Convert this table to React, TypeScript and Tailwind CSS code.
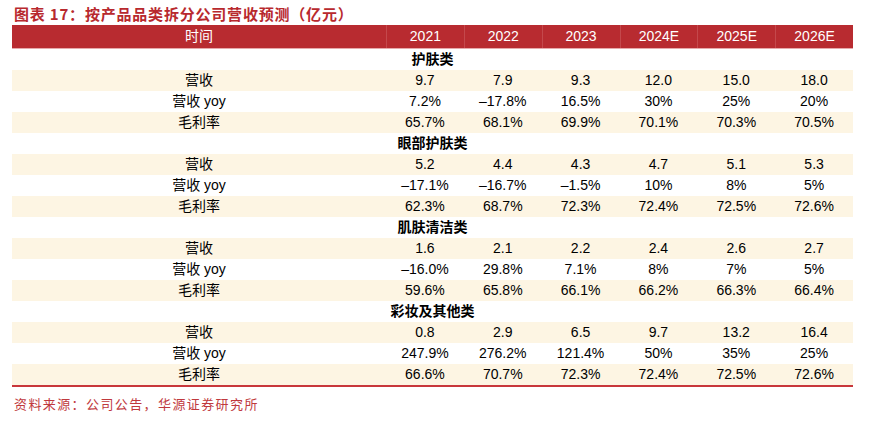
const YEARS = ["2021", "2022", "2023", "2024E", "2025E", "2026E"];

type Section = { name: string; rows: { label: string; values: string[] }[] };

const SECTIONS: Section[] = [
  {
    name: "护肤类",
    rows: [
      { label: "营收", values: ["9.7", "7.9", "9.3", "12.0", "15.0", "18.0"] },
      { label: "营收 yoy", values: ["7.2%", "–17.8%", "16.5%", "30%", "25%", "20%"] },
      { label: "毛利率", values: ["65.7%", "68.1%", "69.9%", "70.1%", "70.3%", "70.5%"] },
    ],
  },
  {
    name: "眼部护肤类",
    rows: [
      { label: "营收", values: ["5.2", "4.4", "4.3", "4.7", "5.1", "5.3"] },
      { label: "营收 yoy", values: ["–17.1%", "–16.7%", "–1.5%", "10%", "8%", "5%"] },
      { label: "毛利率", values: ["62.3%", "68.7%", "72.3%", "72.4%", "72.5%", "72.6%"] },
    ],
  },
  {
    name: "肌肤清洁类",
    rows: [
      { label: "营收", values: ["1.6", "2.1", "2.2", "2.4", "2.6", "2.7"] },
      { label: "营收 yoy", values: ["–16.0%", "29.8%", "7.1%", "8%", "7%", "5%"] },
      { label: "毛利率", values: ["59.6%", "65.8%", "66.1%", "66.2%", "66.3%", "66.4%"] },
    ],
  },
  {
    name: "彩妆及其他类",
    rows: [
      { label: "营收", values: ["0.8", "2.9", "6.5", "9.7", "13.2", "16.4"] },
      { label: "营收 yoy", values: ["247.9%", "276.2%", "121.4%", "50%", "35%", "25%"] },
      { label: "毛利率", values: ["66.6%", "70.7%", "72.3%", "72.4%", "72.5%", "72.6%"] },
    ],
  },
];

const FONT = "font-['Liberation_Sans','Noto_Sans_CJK_SC',sans-serif]";

export default function App() {
  return (
    <main className={`w-[873px] h-[423px] bg-white text-black ${FONT}`}>
      {/* Title */}
      <h1 className="pl-[14px] pt-[5px] h-[25px] text-[15px] leading-[18px] font-bold tracking-[0.8px] text-[#b8292e] font-['Noto_Sans_CJK_SC',serif]">
        图表 17：按产品品类拆分公司营收预测（亿元）
      </h1>

      <div className="ml-[12px] w-[841px]">
        {/* Header */}
        <div className="grid grid-cols-[374px_repeat(6,1fr)] h-[24px] bg-[#b82b30] border-b border-[#e6a9ab] text-white text-[14px]">
          <div className="flex items-center justify-center">时间</div>
          {YEARS.map((y) => (
            <div key={y} className="flex items-center justify-center border-l border-[#c4484c]">
              {y}
            </div>
          ))}
        </div>

        {SECTIONS.map((s) => (
          <div key={s.name}>
            <div className="h-[21px] flex items-center justify-center text-[14px] font-bold">{s.name}</div>
            {s.rows.map((r, i) => (
              <div
                key={r.label}
                className={`grid grid-cols-[374px_repeat(6,1fr)] h-[21px] items-center text-[14px] ${
                  i % 2 === 0 ? "bg-[#fdf5e3]" : "bg-white"
                }`}
              >
                <div className="text-center">{r.label}</div>
                {r.values.map((v, j) => (
                  <div key={j} className="text-center">
                    {v}
                  </div>
                ))}
              </div>
            ))}
          </div>
        ))}

        <div className="h-[2px] bg-[#c8373b]" />
      </div>

      {/* Source */}
      <p className="pl-[14px] pt-[9px] text-[13px] leading-[16px] tracking-[1.4px] text-[#c0393d] font-['Noto_Sans_CJK_SC',serif]">
        资料来源：公司公告，华源证券研究所
      </p>
    </main>
  );
}
